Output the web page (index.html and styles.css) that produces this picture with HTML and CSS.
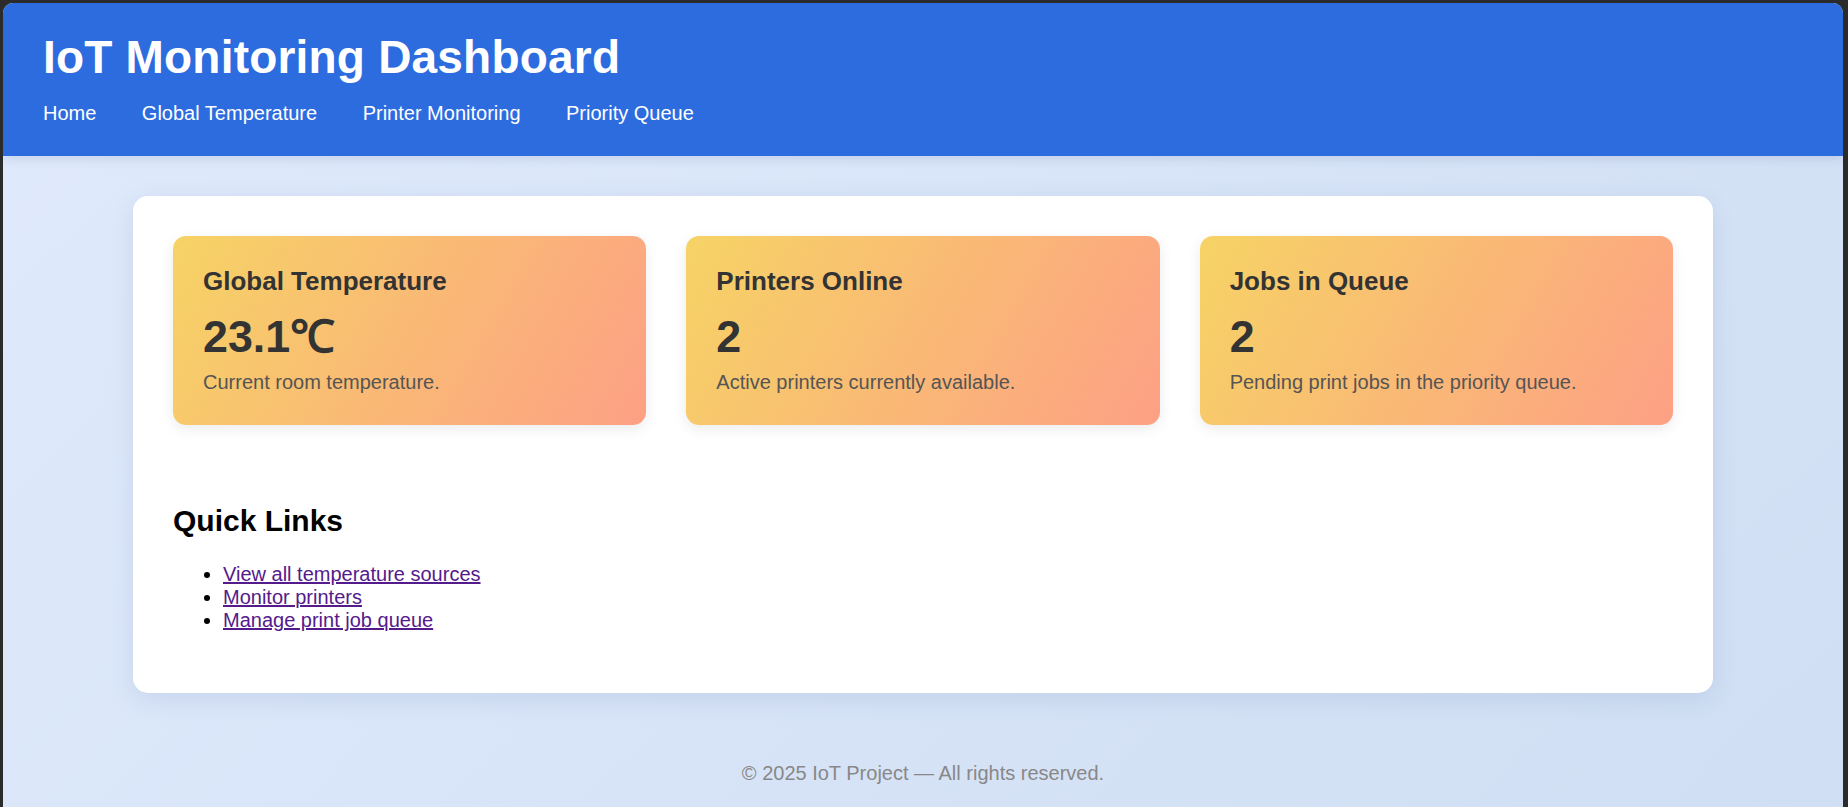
FILE: index.html
```html
<!DOCTYPE html>
<html lang="en">
<head>
<meta charset="utf-8">
<title>IoT Monitoring Dashboard</title>
<link rel="stylesheet" href="styles.css">
</head>
<body>
<div class="window">
  <header class="site-header">
    <h1 class="site-title">IoT Monitoring Dashboard</h1>
    <nav class="site-nav">
      <a href="#">Home</a>
      <a href="#">Global Temperature</a>
      <a href="#">Printer Monitoring</a>
      <a href="#">Priority Queue</a>
    </nav>
  </header>
  <main class="panel">
    <section class="cards">
      <div class="card">
        <h3 class="card-title">Global Temperature</h3>
        <div class="card-value">23.1℃</div>
        <p class="card-desc">Current room temperature.</p>
      </div>
      <div class="card">
        <h3 class="card-title">Printers Online</h3>
        <div class="card-value">2</div>
        <p class="card-desc">Active printers currently available.</p>
      </div>
      <div class="card">
        <h3 class="card-title">Jobs in Queue</h3>
        <div class="card-value">2</div>
        <p class="card-desc">Pending print jobs in the priority queue.</p>
      </div>
    </section>
    <section class="quick">
      <h2 class="quick-title">Quick Links</h2>
      <ul class="quick-list">
        <li><a href="#">View all temperature sources</a></li>
        <li><a href="#">Monitor printers</a></li>
        <li><a href="#">Manage print job queue</a></li>
      </ul>
    </section>
  </main>
  <footer class="site-footer">© 2025 IoT Project — All rights reserved.</footer>
</div>
</body>
</html>
```

FILE: styles.css
```css
html, body {
  margin: 0;
  padding: 0;
  height: 100%;
}
body {
  background: #2b2b2b;
  font-family: "Liberation Sans", Arial, sans-serif;
  font-size: 20px;
  overflow: hidden;
}
.window {
  margin: 3px 5px 0 3px;
  min-height: 900px;
  border-radius: 10px 10px 0 0;
  overflow: hidden;
  background: linear-gradient(135deg, #e0eafc 0%, #cfdef3 100%);
}
.site-header {
  background: #2d6cdf;
  color: #fff;
  padding: 28px 40px 31px;
  box-shadow: 0 3px 10px rgba(30, 60, 120, 0.12);
  position: relative;
}
.site-title {
  margin: 0 0 18px;
  font-size: 46px;
  font-weight: bold;
  line-height: 53px;
  letter-spacing: 0.2px;
}
.site-nav {
  display: flex;
  gap: 45.5px;
  line-height: 23px;
}
.site-nav a {
  color: #fff;
  text-decoration: none;
  font-size: 20px;
}
.panel {
  display: block;
  max-width: 1500px;
  margin: 40px auto 0;
  padding: 40px 40px 41px;
  background: #fff;
  border-radius: 15px;
  box-shadow: 0 6px 24px rgba(60, 90, 150, 0.12);
}
.cards {
  display: grid;
  grid-template-columns: repeat(3, 1fr);
  gap: 40px;
  margin-bottom: 79px;
}
.card {
  background: linear-gradient(120deg, #f6d365 0%, #fda085 100%);
  border-radius: 13px;
  padding: 31px 30px;
  box-shadow: 0 4px 14px rgba(0, 0, 0, 0.08);
  color: #333;
}
.card-title {
  margin: 0 0 15px;
  font-size: 26px;
  font-weight: bold;
  line-height: 29.4px;
  color: #333;
}
.card-value {
  font-size: 44.8px;
  font-weight: bold;
  line-height: 50px;
  color: #333;
  margin-bottom: 9.5px;
}
.card-desc {
  margin: 0;
  font-size: 20px;
  line-height: 23px;
  color: #555;
}
.quick-title {
  margin: 0 0 25px;
  font-size: 30px;
  font-weight: bold;
  line-height: 34.5px;
  color: #000;
}
.quick-list {
  margin: 0 0 20px;
  padding-left: 50px;
  line-height: 23px;
}
.quick-list a {
  color: #551a8b;
}
.site-footer {
  text-align: center;
  color: #888;
  font-size: 20px;
  line-height: 23px;
  padding-top: 69px;
}
```
